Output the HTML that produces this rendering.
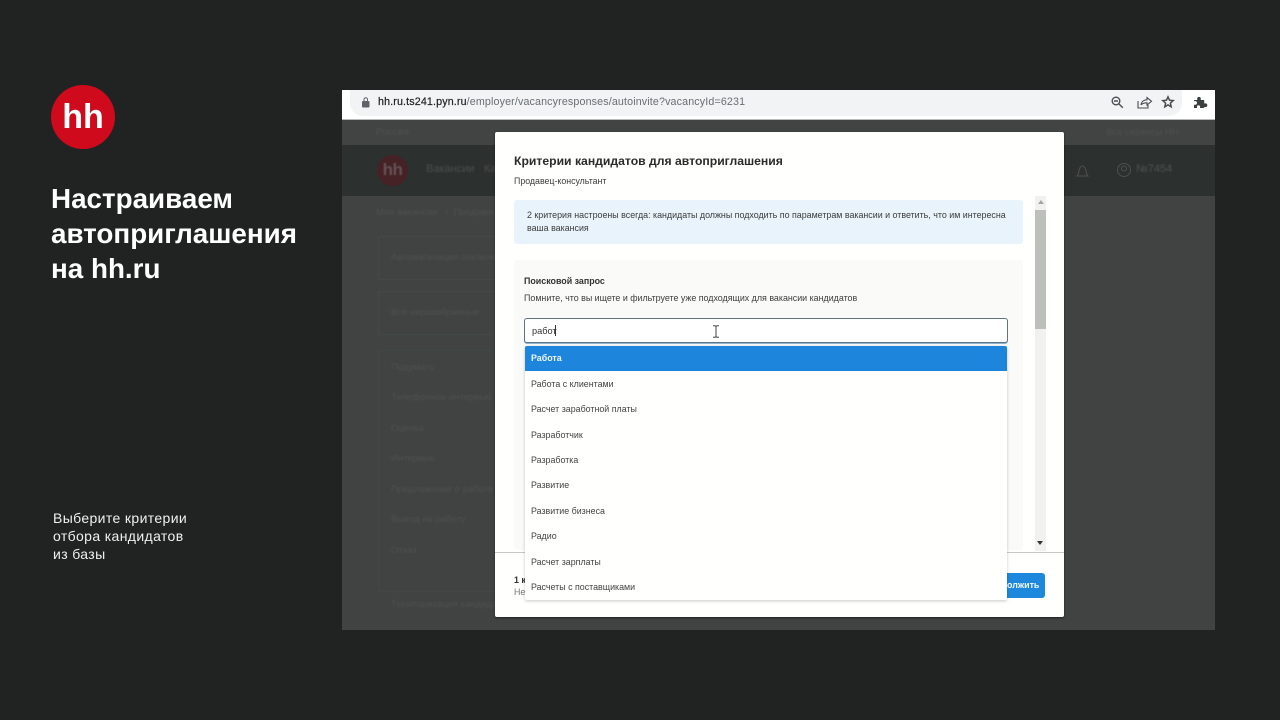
<!DOCTYPE html>
<html lang="ru">
<head>
<meta charset="utf-8">
<title>Настраиваем автоприглашения на hh.ru</title>
<style>
html,body{margin:0;padding:0;background:#202322;width:1280px;height:720px;overflow:hidden}
body{position:relative;font-family:"Liberation Sans","DejaVu Sans",sans-serif}
.a{position:absolute;white-space:nowrap}
.d{color:#4e5150;font-size:10px;filter:blur(.7px)}
.m{color:#3d3d3d;font-size:8.900px;line-height:12px;filter:blur(.25px)}
.o{left:531px;color:#444;font-size:8.900px;line-height:12px;filter:blur(.25px)}
</style>
</head>
<body>
<div class="a" style="left:51px;top:85px;width:64px;height:64px;border-radius:50%;background:#cf0a1c"></div>
<div class="a" style="left:51px;top:97px;width:64px;text-align:center;color:#fff;font-size:34px;line-height:40px;font-weight:bold;filter:blur(.25px)">hh</div>
<div class="a" style="left:51px;top:181px;color:#fff;font-size:27.800px;line-height:35px;font-weight:bold;filter:blur(.25px)">Настраиваем<br>автоприглашения<br>на hh.ru</div>
<div class="a" style="left:53px;top:509px;color:#f0f0f0;font-size:14px;line-height:18px;letter-spacing:.37px;filter:blur(.15px)">Выберите критерии<br>отбора кандидатов<br>из базы</div>

<!-- Browser -->
<div class="a" style="left:342px;top:90px;width:873px;height:540px;background:#404342;overflow:hidden">
  <div class="a" style="left:0;top:30px;width:873px;height:25px;background:#414443"></div>
  <div class="a" style="left:0;top:55px;width:873px;height:51px;background:#2c302f"></div>
  <div class="a" style="left:0;top:0;width:873px;height:30px;background:#fff"></div>
  <div class="a" style="left:8px;top:0;width:832px;height:26px;background:#f1f3f4;border-radius:0 0 13px 13px"></div>
  <div class="a" style="left:0;top:29px;width:873px;height:1px;background:#b9bbbb"></div>
</div>

<svg class="a" style="left:342px;top:90px" width="873" height="30" viewBox="0 0 873 30">
  <g fill="#5f6368">
    <rect x="20" y="11" width="7.500" height="6.500" rx="1"/>
    <path d="M21.500 11V9.500a2.250 2.250 0 0 1 4.500 0V11h-1V9.500a1.250 1.250 0 0 0-2.500 0V11z"/>
  </g>
  <g fill="none" stroke="#4a4d50" stroke-width="1.400">
    <circle cx="774" cy="11" r="3.800"/>
    <path d="M777 14l3.800 3.800M772 11h4"/>
    <path d="M796 11v7h10v-3M799 15c.5-3.500 3-5.200 6-5.200V7.500l4.500 3.800-4.500 3.800v-2.300c-2.500 0-4.500.5-6 2z" stroke-width="1.100"/>
    <path d="M826 6.800l1.500 3.400 3.700.4-2.800 2.500.8 3.700-3.200-1.900-3.200 1.900.8-3.700-2.800-2.500 3.700-.4z" stroke-width="1.500"/>
  </g>
  <path d="M852 10h3.200V8.700a1.800 1.800 0 0 1 3.600 0V10h3.400v3.400h1.300a1.800 1.800 0 0 1 0 3.600h-1.300v1H858v-1.300a1.500 1.500 0 0 0-3 0V18h-3v-3.300h1.200a1.800 1.800 0 0 0 0-3.600H852z" fill="#3d4043"/>
</svg>
<div class="a" style="left:378px;top:96px;font-size:10.700px;line-height:13px;color:#6a6e72;letter-spacing:.14px;filter:blur(.15px)"><span style="color:#222;-webkit-text-stroke:.2px #222">hh.ru.ts241.pyn.ru</span>/employer/vacancyresponses/autoinvite?vacancyId=6231</div>

<!-- Dimmed page -->
<div class="a d" style="left:376px;top:127px">Россия</div>
<div class="a d" style="left:1106px;top:127px;font-size:9.500px">Все сервисы HH</div>
<div class="a" style="left:377px;top:155px;width:31px;height:31px;border-radius:50%;background:#462226"></div>
<div class="a" style="left:377px;top:159px;width:31px;text-align:center;color:#625254;font-size:17px;line-height:22px;font-weight:bold;letter-spacing:-.5px;filter:blur(.5px)">hh</div>
<div class="a d" style="left:426px;top:163px;font-size:11px;color:#4c4f4e">Вакансии</div>
<div class="a d" style="left:484px;top:163px;font-size:11px;color:#4c4f4e">Ка</div>
<svg class="a" style="left:1074px;top:160px" width="80" height="20" viewBox="0 0 80 20"><g fill="none" stroke="#4c4f4e" stroke-width="1.100"><path d="M3 16c2-2 1.500-4 2.500-7 .5-2 2-3 3-3s2.500 1 3 3c1 3 .5 5 2.500 7z"/><circle cx="50" cy="10" r="6.500"/><circle cx="50" cy="8.500" r="2.500"/></g></svg>
<div class="a d" style="left:1136px;top:163px;font-size:11px;color:#505352">№7454</div>
<div class="a d" style="left:376px;top:207px;font-size:9.500px">Мои вакансии &nbsp; / &nbsp;Продавец</div>
<div class="a" style="left:378px;top:236px;width:117px;height:42px;border:1px solid #464948;border-right:0;filter:blur(.5px)"></div>
<div class="a" style="left:378px;top:291px;width:117px;height:42px;border:1px solid #464948;border-right:0;filter:blur(.5px)"></div>
<div class="a" style="left:378px;top:350px;width:117px;height:240px;border:1px solid #454847;border-right:0;filter:blur(.5px)"></div>
<div class="a d" style="left:391px;top:252px;font-size:9.500px">Автоматизация отключена</div>
<div class="a d" style="left:391px;top:307px;font-size:9.500px">Все неразобранные</div>
<div class="a d" style="left:391px;top:362px;font-size:9.500px">Подумать</div>
<div class="a d" style="left:391px;top:392px;font-size:9.500px">Телефонное интервью</div>
<div class="a d" style="left:391px;top:423px;font-size:9.500px">Оценка</div>
<div class="a d" style="left:391px;top:453px;font-size:9.500px">Интервью</div>
<div class="a d" style="left:391px;top:484px;font-size:9.500px">Предложение о работе</div>
<div class="a d" style="left:391px;top:514px;font-size:9.500px">Выход на работу</div>
<div class="a d" style="left:391px;top:545px;font-size:9.500px">Отказ</div>
<div class="a d" style="left:391px;top:599px;font-size:9.500px">Територизация кандидатов</div>

<!-- Modal -->
<div class="a" style="left:495px;top:132px;width:569px;height:485px;background:#fffffd;border-radius:2px;box-shadow:0 1px 2px rgba(0,0,0,.5)"></div>
<div class="a" style="left:514px;top:154px;font-size:12.200px;line-height:15px;font-weight:bold;color:#2b2b2b;filter:blur(.2px)">Критерии кандидатов для автоприглашения</div>
<div class="a m" style="left:514px;top:175px;font-size:8.800px">Продавец-консультант</div>
<div class="a" style="left:514px;top:200px;width:509px;height:44px;background:#e8f3fb;border-radius:3px"></div>
<div class="a m" style="left:527px;top:209px;line-height:13px">2 критерия настроены всегда: кандидаты должны подходить по параметрам вакансии и ответить, что им интересна<br>ваша вакансия</div>
<div class="a" style="left:514px;top:260px;width:509px;height:290px;background:#fafaf8;border-radius:3px"></div>
<div class="a m" style="left:524px;top:275px;font-weight:bold;color:#333">Поисковой запрос</div>
<div class="a m" style="left:524px;top:292px">Помните, что вы ищете и фильтруете уже подходящих для вакансии кандидатов</div>
<div class="a" style="left:524px;top:318px;width:482px;height:23px;background:#fff;border:1px solid #5e7485;border-radius:3px;box-shadow:0 1px 0 #8fb4cf"></div>
<div class="a m" style="left:532px;top:325px;color:#333;font-size:9.200px">работ</div>
<div class="a" style="left:555px;top:325px;width:1px;height:11px;background:#333"></div>
<svg class="a" style="left:711px;top:325px" width="10" height="13" viewBox="0 0 10 13"><path d="M2 .7h1.500c1 0 1.500.5 1.500 1v9.600c0 .5-.5 1-1.500 1H2M8 .7H6.500c-1 0-1.500.5-1.500 1v9.600c0 .5.5 1 1.500 1H8" fill="none" stroke="#444" stroke-width="1"/></svg>

<!-- Scrollbar -->
<div class="a" style="left:1035px;top:196px;width:11px;height:355px;background:#f1f1ef"></div>
<div class="a" style="left:1035px;top:210px;width:11px;height:119px;background:#bdbfbb"></div>
<div class="a" style="left:1038px;top:200px;width:0;height:0;border:3px solid transparent;border-top:0;border-bottom:4px solid #a5a5a5"></div>
<div class="a" style="left:1037px;top:541px;width:0;height:0;border:3.500px solid transparent;border-bottom:0;border-top:4px solid #333"></div>

<!-- Footer -->
<div class="a" style="left:495px;top:552px;width:569px;height:1px;background:#c8c8c6"></div>
<div class="a m" style="left:514px;top:574px;font-weight:bold;color:#333">1 к</div>
<div class="a m" style="left:514px;top:586px;color:#777">Не</div>
<div class="a" style="left:990px;top:573px;width:55px;height:25px;background:#1e88dc;border-radius:3px"></div>
<div class="a" style="left:1007px;top:579px;color:#f2f8fc;font-size:8.900px;line-height:12px;font-weight:bold;filter:blur(.2px)">олжить</div>

<!-- Dropdown -->
<div class="a" style="left:525px;top:346px;width:482px;height:254px;background:#fffffd;border-radius:2px;box-shadow:0 1px 3px rgba(0,0,0,.22)"></div>
<div class="a" style="left:525px;top:346px;width:482px;height:25px;background:#1e85dc;border-radius:2px 2px 0 0"></div>
<div class="a o" style="top:352px;color:#eef6fc;font-weight:bold">Работа</div>
<div class="a o" style="top:378px">Работа с клиентами</div>
<div class="a o" style="top:403px">Расчет заработной платы</div>
<div class="a o" style="top:429px">Разработчик</div>
<div class="a o" style="top:454px">Разработка</div>
<div class="a o" style="top:479px">Развитие</div>
<div class="a o" style="top:505px">Развитие бизнеса</div>
<div class="a o" style="top:530px">Радио</div>
<div class="a o" style="top:556px">Расчет зарплаты</div>
<div class="a o" style="top:581px">Расчеты с поставщиками</div>
</body>
</html>
